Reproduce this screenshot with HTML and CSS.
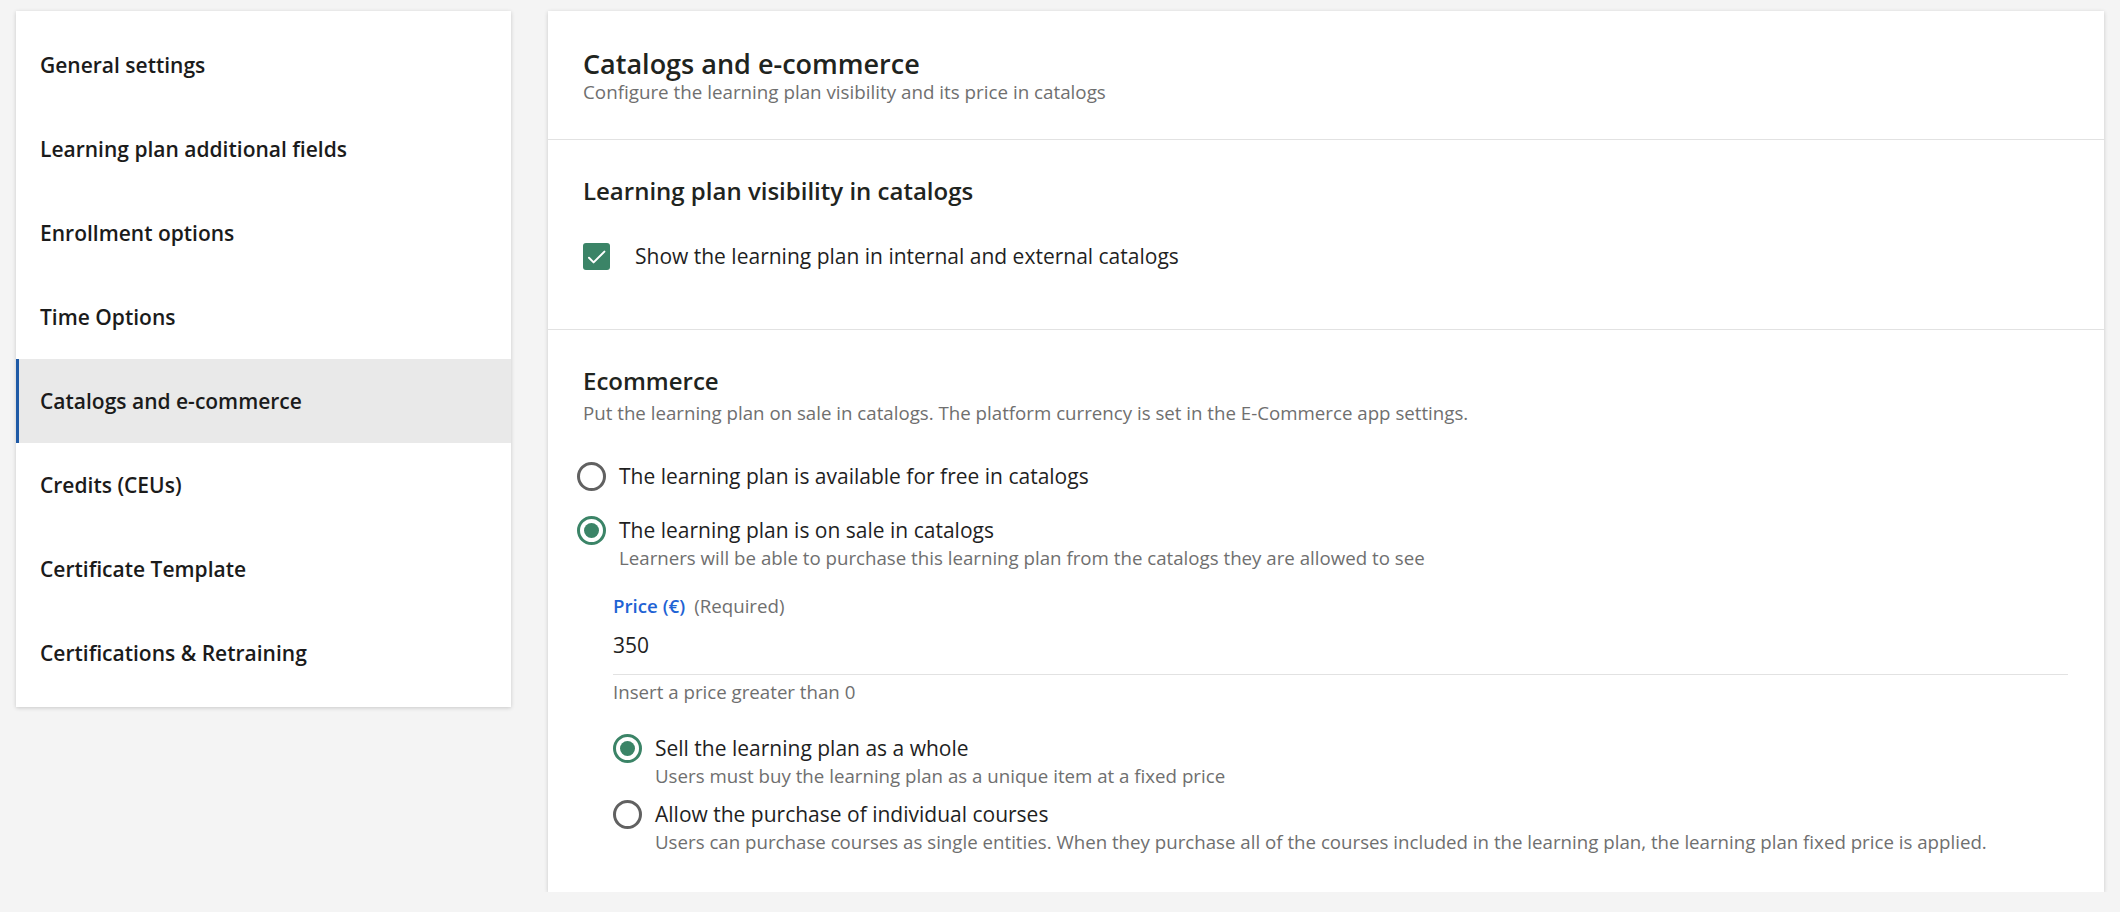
FILE: index.html
```html
<!DOCTYPE html>
<html lang="en">
<head>
<meta charset="utf-8">
<title>Catalogs and e-commerce</title>
<link rel="stylesheet" href="styles.css">
</head>
<body>
<div class="layout">
  <nav class="sidebar">
    <a class="nav-item">General settings</a>
    <a class="nav-item">Learning plan additional fields</a>
    <a class="nav-item">Enrollment options</a>
    <a class="nav-item">Time Options</a>
    <a class="nav-item active">Catalogs and e-commerce</a>
    <a class="nav-item">Credits (CEUs)</a>
    <a class="nav-item">Certificate Template</a>
    <a class="nav-item">Certifications &amp; Retraining</a>
  </nav>

  <main class="panel">
    <header class="panel-header">
      <h1 class="panel-title">Catalogs and e-commerce</h1>
      <p class="panel-subtitle">Configure the learning plan visibility and its price in catalogs</p>
    </header>

    <section class="section visibility">
      <h2 class="section-title">Learning plan visibility in catalogs</h2>
      <label class="check-row">
        <span class="checkbox">
          <svg viewBox="0 0 27 27" width="27" height="27"><path d="M6 14.8 L10.6 19.4 L21.4 8.6" fill="none" stroke="#fff" stroke-width="2" stroke-linecap="round" stroke-linejoin="round"/></svg>
        </span>
        <span class="check-label">Show the learning plan in internal and external catalogs</span>
      </label>
    </section>

    <section class="section ecommerce">
      <h2 class="section-title">Ecommerce</h2>
      <p class="section-desc">Put the learning plan on sale in catalogs. The platform currency is set in the E-Commerce app settings.</p>

      <div class="radio-group top">
        <div class="option">
          <span class="radio"></span>
          <div class="option-text">
            <div class="option-label">The learning plan is available for free in catalogs</div>
          </div>
        </div>
        <div class="option">
          <span class="radio checked"></span>
          <div class="option-text">
            <div class="option-label">The learning plan is on sale in catalogs</div>
            <div class="option-desc">Learners will be able to purchase this learning plan from the catalogs they are allowed to see</div>
          </div>
        </div>
      </div>

      <div class="sale-details">
        <div class="field">
          <div class="field-label"><span class="field-name">Price (€)</span><span class="field-req">(Required)</span></div>
          <div class="field-input">350</div>
          <div class="field-help">Insert a price greater than 0</div>
        </div>

        <div class="radio-group nested">
          <div class="option">
            <span class="radio checked"></span>
            <div class="option-text">
              <div class="option-label">Sell the learning plan as a whole</div>
              <div class="option-desc">Users must buy the learning plan as a unique item at a fixed price</div>
            </div>
          </div>
          <div class="option">
            <span class="radio"></span>
            <div class="option-text">
              <div class="option-label">Allow the purchase of individual courses</div>
              <div class="option-desc">Users can purchase courses as single entities. When they purchase all of the courses included in the learning plan, the learning plan fixed price is applied.</div>
            </div>
          </div>
        </div>
      </div>
    </section>
  </main>
</div>
</body>
</html>
```

FILE: styles.css
```css
* { box-sizing: border-box; }

html, body {
  margin: 0;
  padding: 0;
  background: #f4f4f4;
  font-family: "Open Sans", "Noto Sans", "Liberation Sans", sans-serif;
  color: #1f1f1f;
}

.layout {
  display: grid;
  grid-template-columns: 495px 1fr;
  column-gap: 37px;
  align-items: start;
  padding: 11px 16px 0 16px;
}

/* Sidebar */
.sidebar {
  background: #fff;
  box-shadow: 0 1px 4px rgba(0, 0, 0, 0.18);
  padding: 12px 0;
  display: flex;
  flex-direction: column;
}

.nav-item {
  height: 84px;
  display: flex;
  align-items: center;
  padding-left: 24px;
  font-size: 21px;
  font-weight: 600;
  color: #1b1b1b;
  text-decoration: none;
}

.nav-item.active {
  background: #e9e9e9;
  border-left: 3px solid #1f5aa6;
  padding-left: 21px;
}

/* Main panel */
.panel {
  background: #fff;
  box-shadow: 0 1px 4px rgba(0, 0, 0, 0.18);
}

.panel-header {
  padding: 36px 35px 35px;
  border-bottom: 1px solid #e2e2e2;
}

.panel-title {
  margin: 0;
  font-size: 27px;
  line-height: 33px;
  font-weight: 600;
  color: #1f2420;
}

.panel-subtitle {
  margin: 0;
  font-size: 18.8px;
  line-height: 24px;
  color: #6f6f6f;
}

.section {
  padding: 35px 36px 37px 35px;
}

.visibility {
  border-bottom: 1px solid #e2e2e2;
  padding-bottom: 35px;
}

.section-title {
  margin: 0;
  font-size: 24px;
  line-height: 32px;
  font-weight: 600;
  color: #1f2420;
}

.check-row {
  display: flex;
  align-items: center;
  gap: 25px;
  margin-top: 35px;
  margin-bottom: 24px;
}

.checkbox {
  width: 27px;
  height: 27px;
  border-radius: 3px;
  background: #3b8467;
  display: block;
  flex: none;
}

.checkbox svg { display: block; }

.check-label {
  font-size: 21px;
  line-height: 28px;
  color: #1f1f1f;
}

.section-desc {
  margin: 3px 0 0;
  font-size: 18.7px;
  line-height: 26px;
  color: #6f6f6f;
}

/* Radios */
.radio-group {
  display: flex;
  flex-direction: column;
}

.radio-group.top {
  margin: 36px 0 0 -6px;
  gap: 25px;
}

.radio-group.nested {
  margin-top: 29px;
  gap: 11px;
}

.option {
  display: flex;
  align-items: flex-start;
  gap: 13px;
}

.radio {
  width: 29px;
  height: 29px;
  flex: none;
  border-radius: 50%;
  border: 3.5px solid #616161;
  display: flex;
  align-items: center;
  justify-content: center;
}

.radio.checked {
  border-color: #3b8467;
}

.radio.checked::after {
  content: "";
  width: 15px;
  height: 15px;
  border-radius: 50%;
  background: #3b8467;
}

.option-label {
  font-size: 21px;
  line-height: 29px;
  color: #1f1f1f;
}

.option-desc {
  font-size: 18.7px;
  line-height: 26px;
  color: #6f6f6f;
}

/* Sale details */
.sale-details {
  margin-left: 30px;
  margin-top: 22px;
}

.field-label {
  font-size: 18.7px;
  line-height: 26px;
}

.field-name {
  color: #1f63d4;
  font-weight: 600;
}

.field-req {
  color: #6f6f6f;
  margin-left: 9px;
}

.field-input {
  margin-top: 12px;
  font-size: 21px;
  line-height: 29px;
  padding-bottom: 14px;
  border-bottom: 1px solid #e2e2e2;
  color: #1f1f1f;
}

.field-help {
  margin-top: 4px;
  font-size: 18.7px;
  line-height: 26px;
  color: #6f6f6f;
}
```
